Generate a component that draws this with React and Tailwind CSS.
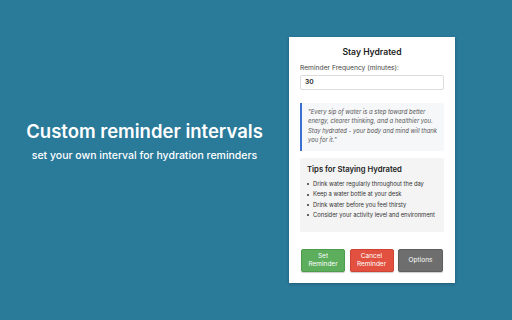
const tips = [
  'Drink water regularly throughout the day',
  'Keep a water bottle at your desk',
  'Drink water before you feel thirsty',
  'Consider your activity level and environment',
];

const App = () => {
  return (
    <div className="w-[512px] h-[320px] bg-[#2a7a9a] flex overflow-hidden font-['Inter',sans-serif]">
      {/* left caption */}
      <div className="w-[289px] flex flex-col items-center pt-[119px] text-white">
        <h1 className="text-[18.5px] leading-[24px] font-semibold">Custom reminder intervals</h1>
        <p className="mt-[6px] text-[10.5px] leading-[14px] font-medium">set your own interval for hydration reminders</p>
      </div>

      {/* popup */}
      <div className="mt-[37px] w-[166px] h-[246px] bg-white shadow-[0_1px_3px_rgba(0,0,0,0.25)] px-[11px] pt-[8px]">
        <h2 className="text-center text-[8.6px] leading-[14px] font-semibold text-[#222]">Stay Hydrated</h2>
        <div className="mt-[4px] text-[6.7px] leading-[10px] text-[#444]">Reminder Frequency (minutes):</div>
        <div className="mt-[2px] h-[15px] border border-[#dcdcdc] rounded-[2px] flex items-center px-[4px] text-[6.7px] font-semibold text-[#222]">30</div>

        <div className="mt-[13px] h-[48px] bg-[#f6f7f9] border-l-2 border-[#3b6fd4] rounded-r-[2px] pl-[6px] pr-[5px] pt-[4px] text-[5.9px] leading-[9.3px] italic text-[#555]">
          "Every sip of water is a step toward better energy, clearer thinking, and a healthier you. Stay hydrated - your body and mind will thank you for it."
        </div>

        <div className="mt-[7px] h-[74px] bg-[#f4f4f4] rounded-[2px] px-[7px] pt-[7px]">
          <h3 className="text-[7.7px] leading-[10px] font-semibold text-[#222]">Tips for Staying Hydrated</h3>
          <ul className="mt-[4px]">
            {tips.map((t) => (
              <li key={t} className="flex items-center gap-[4px] text-[5.8px] leading-[10.4px] text-[#333]">
                <span className="w-[2px] h-[2px] rounded-full bg-[#333]"></span>
                {t}
              </li>
            ))}
          </ul>
        </div>

        <div className="mt-[17px] flex justify-between px-[1px]">
          <button className="w-[44px] h-[23px] rounded-[2px] bg-[#5cad5c] border border-[#4f9c4f] text-white text-[6.5px] leading-[7.5px] shadow-[0_1px_1px_rgba(0,0,0,0.2)]">Set<br />Reminder</button>
          <button className="w-[44px] h-[23px] rounded-[2px] bg-[#e2513f] border border-[#cf4434] text-white text-[6.5px] leading-[7.5px] shadow-[0_1px_1px_rgba(0,0,0,0.2)]">Cancel<br />Reminder</button>
          <button className="w-[45px] h-[23px] rounded-[2px] bg-[#6e6e6e] border border-[#5e5e5e] text-white text-[6.5px] leading-[7.5px] shadow-[0_1px_1px_rgba(0,0,0,0.2)]">Options</button>
        </div>
      </div>
    </div>
  );
};

export default App;
